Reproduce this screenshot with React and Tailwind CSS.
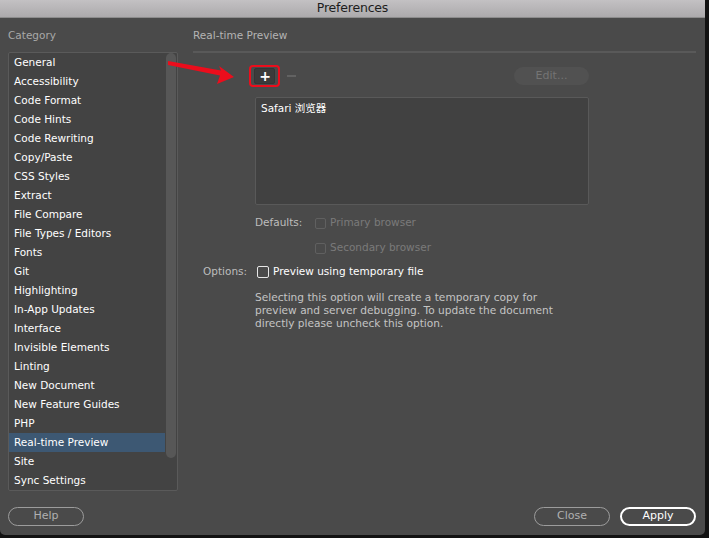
import React from "react";

const items = [
  "General","Accessibility","Code Format","Code Hints","Code Rewriting","Copy/Paste","CSS Styles","Extract","File Compare","File Types / Editors","Fonts","Git","Highlighting","In-App Updates","Interface","Invisible Elements","Linting","New Document","New Feature Guides","PHP","Real-time Preview","Site","Sync Settings",
];

const font = { fontFamily: '"DejaVu Sans", "Noto Sans CJK SC", sans-serif' };

export default function App() {
  return (
    <div className="w-[709px] h-[538px] bg-[#121212] overflow-hidden" style={font}>
      <div className="relative w-[705px] h-[535px] bg-[#4a4a4a] rounded-b-[5px] flex flex-col overflow-hidden">
        {/* title bar */}
        <div className="h-[18px] shrink-0 bg-gradient-to-b from-[#c3c1c3] to-[#acaaac] border-b border-[#8c8c8c] flex items-center justify-center">
          <span className="text-[12.5px] leading-none text-[#1d1d1d] tracking-[-0.2px]">Preferences</span>
        </div>
        {/* body */}
        <div className="flex flex-1 pt-[10px] px-[8px]">
          {/* left */}
          <div className="w-[170px] flex flex-col">
            <div className="h-[14px] text-[10.5px] leading-[14px] text-[#a8a8a8]">Category</div>
            <div className="mt-[10px] h-[439px] border border-[#5a5a5a] rounded-[2px] bg-[#434343] relative">
              <div className="flex flex-col w-[156px]">
                {items.map((it) => (
                  <div
                    key={it}
                    className={
                      "h-[19px] pl-[5px] flex items-center text-[10.5px] text-white whitespace-nowrap " +
                      (it === "Real-time Preview" ? "bg-[#3d5873]" : "")
                    }
                  >
                    {it}
                  </div>
                ))}
              </div>
              <div className="absolute right-[1px] top-0 w-[10px] h-[405px] rounded-full bg-[#575757]" />
            </div>
            <div className="mt-[16px] w-[76px] h-[19px] rounded-full border border-[#9c9c9c] flex items-center justify-center text-[11px] text-[#b0b0b0]">
              Help
            </div>
          </div>
          {/* right */}
          <div className="ml-[15px] w-[503px] flex flex-col">
            <div className="h-[14px] text-[10.5px] leading-[14px] text-[#b4b4b4]">Real-time Preview</div>
            <div className="mt-[9px] h-[2px] bg-[#595959]" />
            <div className="pl-[62px] w-[396px] flex flex-col">
              <div className="mt-[12px] -ml-[6px] h-[22px] flex items-center">
                <div className="w-[31px] h-[22px] rounded-[4px] border-[2.5px] border-[#ec0d1c] flex items-center justify-center">
                  <div className="w-[21px] h-[16px] rounded-[2px] bg-[#3b3b3b] border border-[#353535] flex items-center justify-center text-white text-[14px] font-bold leading-none pl-[1px]">
                    +
                  </div>
                </div>
                <div className="ml-[7px] w-[9px] h-[2px] bg-[#626262]" />
                <div className="ml-auto w-[75px] h-[18px] rounded-full bg-[#515151] flex items-center justify-center text-[11px] text-[#747474]">
                  Edit...
                </div>
              </div>
              <div className="mt-[10px] w-[334px] h-[108px] rounded-[2px] border border-[#595959] bg-[#414141] px-[5px] pt-[3px] text-[10.5px] text-white leading-[14px]">
                Safari 浏览器
              </div>
              <div className="mt-[9px] h-[18px] flex items-center text-[10.5px]">
                <span className="w-[60px] text-[#bdbdbd]">Defaults:</span>
                <span className="w-[11px] h-[11px] rounded-[2px] border border-[#606060]" />
                <span className="ml-[4px] text-[#7a7a7a]">Primary browser</span>
              </div>
              <div className="mt-[7px] h-[18px] flex items-center text-[10.5px]">
                <span className="w-[60px]" />
                <span className="w-[11px] h-[11px] rounded-[2px] border border-[#606060]" />
                <span className="ml-[4px] text-[#7a7a7a]">Secondary browser</span>
              </div>
            </div>
            <div className="mt-[6px] pl-[10px] h-[18px] flex items-center text-[10.5px]">
              <span className="w-[54px] text-[#bdbdbd]">Options:</span>
              <span className="w-[12px] h-[12px] rounded-[2px] border border-[#e6e6e6]" />
              <span className="ml-[4px] text-white">Preview using temporary file</span>
            </div>
            <div className="mt-[10px] pl-[62px] w-[372px] text-[10.6px] leading-[13px] text-[#c4c4c4]">
              Selecting this option will create a temporary copy for preview and server debugging. To update the document directly please uncheck this option.
            </div>
            <div className="mt-auto mb-[9px] flex justify-end gap-[10px]">
              <div className="w-[76px] h-[19px] rounded-full border border-[#9c9c9c] flex items-center justify-center text-[11px] text-[#b0b0b0]">
                Close
              </div>
              <div className="w-[76px] h-[19px] rounded-full border-2 border-white flex items-center justify-center text-[11px] text-white">
                Apply
              </div>
            </div>
          </div>
        </div>
        {/* red annotation arrow */}
        <svg className="absolute left-0 top-0 pointer-events-none" width="705" height="535">
          <polygon
            points="168,61 221,70.5 219,66 234,77 217,84 220,75.5 168,65"
            fill="#ec0d1c"
          />
        </svg>
      </div>
    </div>
  );
}
